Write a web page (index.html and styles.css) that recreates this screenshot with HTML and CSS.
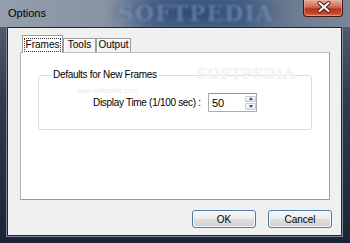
FILE: index.html
```html
<!DOCTYPE html>
<html lang="en">
<head>
    <meta charset="UTF-8">
    <title>Options</title>
    <link rel="stylesheet" href="styles.css">
</head>
<body>
    <div class="window">
        <div class="titlebar">
            <span class="title">Options</span>
            <span class="watermark">SOFTPEDIA</span>
            <div class="close-btn">
                <svg width="40" height="17" viewBox="0 0 40 17">
                    <path d="M15.5 4 L24.5 12 M24.5 4 L15.5 12" stroke="#4a1e16" stroke-width="4" stroke-linecap="round"/>
                    <path d="M15.5 4 L24.5 12 M24.5 4 L15.5 12" stroke="#ffffff" stroke-width="2" stroke-linecap="round"/>
                </svg>
            </div>
        </div>

        <div class="frame-body">
            <div class="client">
                <!-- tab strip -->
                <div class="tabs">
                    <div class="tab active"><span class="focus">Frames</span></div>
                    <div class="tab">Tools</div>
                    <div class="tab">Output</div>
                </div>

                <div class="panel">
                    <fieldset class="group">
                        <legend>Defaults for New Frames</legend>
                        <div class="row">
                            <label for="displayTime">Display Time (1/100 sec) :</label>
                            <div class="spin-box">
                                <input type="text" id="displayTime" value="50">
                                <div class="spinner">
                                    <span class="spin-up"></span>
                                    <span class="spin-down"></span>
                                </div>
                            </div>
                        </div>
                    </fieldset>
                    <span class="panel-mark">SOFTPEDIA</span>
                    <span class="panel-url">www.softpedia.com</span>
                </div>

                <div class="buttons">
                    <button class="btn default">OK</button>
                    <button class="btn">Cancel</button>
                </div>
            </div>
        </div>
    </div>
</body>
</html>
```

FILE: styles.css
```css
body { margin: 0; font-family: "Liberation Sans", Arial, sans-serif; font-size: 10px; color: #000; }
.window { width: 350px; height: 243px; display: flex; flex-direction: column; background: linear-gradient(#5d6776, #323b4b 40%, #1c2334); overflow: hidden; }

/* title bar */
.titlebar {
    height: 27px; flex: none; position: relative; display: flex; justify-content: space-between; align-items: flex-start;
    background:
        radial-gradient(ellipse 90px 22px at 195px 12px, rgba(40,70,115,0.9), rgba(40,70,115,0) 100%),
        linear-gradient(90deg, #949eac 0%, #8893a3 30%, #56698a 45%, #4e6587 70%, #6f7d90 85%, #7b8798 100%);
}
.title { font-size: 11px; line-height: 26px; padding-left: 8px; position: relative; z-index: 1; }
.watermark {
    position: absolute; left: 118px; top: 0; font-family: "DejaVu Serif", serif; font-weight: bold;
    font-size: 22px; line-height: 27px; letter-spacing: 1px; color: rgba(130,160,200,0.5); filter: blur(1px);
}
.close-btn {
    width: 40px; height: 17px; margin-right: 7px; position: relative; z-index: 1; box-sizing: border-box;
    border: 1px solid #3b1a14; border-top: none; border-radius: 0 0 4px 4px;
    background: linear-gradient(#e2a899, #cf6a52 45%, #b8341c 55%, #c9482c 85%, #e07a5a);
    box-shadow: inset 0 0 0 1px rgba(255,210,200,0.35);
}
.close-btn svg { display: block; margin-top: -1px; }

/* window body */
.frame-body { flex: 1; display: flex; padding: 0 8px 7px 7px; }
.client {
    flex: 1; background: #f0f0f0; border: 1px solid #1e2534; box-shadow: 0 0 0 1px #7d8aa0;
    display: flex; flex-direction: column;
}

/* tabs */
.tabs { display: flex; align-items: flex-end; height: 17px; margin: 8px 0 -1px 14px; }
.tab {
    box-sizing: border-box; height: 14px; margin-bottom: 1px; text-align: center; line-height: 12px;
    border: 1px solid #9c9c9c; border-bottom: none; background: #f3f3f3;
    box-shadow: inset 1px 1px 0 #fff;
}
.tab:nth-child(2) { width: 33px; }
.tab:nth-child(3) { width: 35px; }
.tab.active {
    width: 41px; height: 18px; margin-bottom: 0; position: relative; z-index: 1;
    background: #fff; padding: 2px 1px 1px 1px; display: flex;
}
.focus { flex: 1; border: 1px dotted #333; line-height: 11px; }

.panel {
    position: relative; box-sizing: border-box; width: 310px; height: 148px; margin-left: 12px;
    background: #fff; border: 1px solid; border-color: #c4c4c4 #9d9d9d #9d9d9d #b4b4b4;
    padding: 16px 17px 0 17px;
}
.group { margin: 0; padding: 0; border: 1px solid #d5dfe5; border-radius: 3px; }
.group legend { margin-left: 12px; padding: 0 2px; line-height: 12px; letter-spacing: -0.3px; }
.row { display: flex; align-items: center; padding: 12px 0 17px 54px; }
.row label { width: 115px; letter-spacing: -0.3px; position: relative; z-index: 1; }

.spin-box {
    width: 49px; height: 19px; box-sizing: border-box; display: flex; align-items: center;
    border: 1px solid #abadb3; border-top-color: #8e939b; background: #fff;
}
.spin-box input { width: 30px; border: none; padding: 0 0 0 3px; font: inherit; font-size: 11px; outline: none; }
.spinner { width: 11px; height: 14px; margin-left: 3px; display: flex; flex-direction: column; gap: 1px; }
.spinner span {
    flex: 1; border: 1px solid #c2cad4; border-radius: 1px; background: linear-gradient(#f9fafb, #e4e8ee);
    display: flex; align-items: center; justify-content: center;
}
.spin-up::after { content: ""; border: 2px solid transparent; border-bottom: 3px solid #3a4a6a; border-top: none; }
.spin-down::after { content: ""; border: 2px solid transparent; border-top: 3px solid #3a4a6a; border-bottom: none; }

.panel-mark {
    position: absolute; left: 176px; top: 13px; font-family: "DejaVu Serif", serif; font-weight: bold;
    font-size: 14px; letter-spacing: 0.5px; color: #f4f4f4; text-shadow: 0 0 1px #e6e6e6;
}
.panel-url { position: absolute; left: 56px; top: 34px; font-size: 7px; line-height: 8px; color: #ebebeb; }

/* dialog buttons */
.buttons { display: flex; justify-content: flex-end; gap: 12px; margin: 10px 9px 0 0; }
.btn {
    width: 64px; height: 18px; padding: 0; font: inherit; font-size: 10px; color: #000;
    border: 1px solid #4b7ba8; border-radius: 3px;
    background: linear-gradient(#f6f6f6, #ececec 48%, #dedede 52%, #d2d2d2);
    box-shadow: inset 0 0 0 1px #f8fbfd;
}
```
